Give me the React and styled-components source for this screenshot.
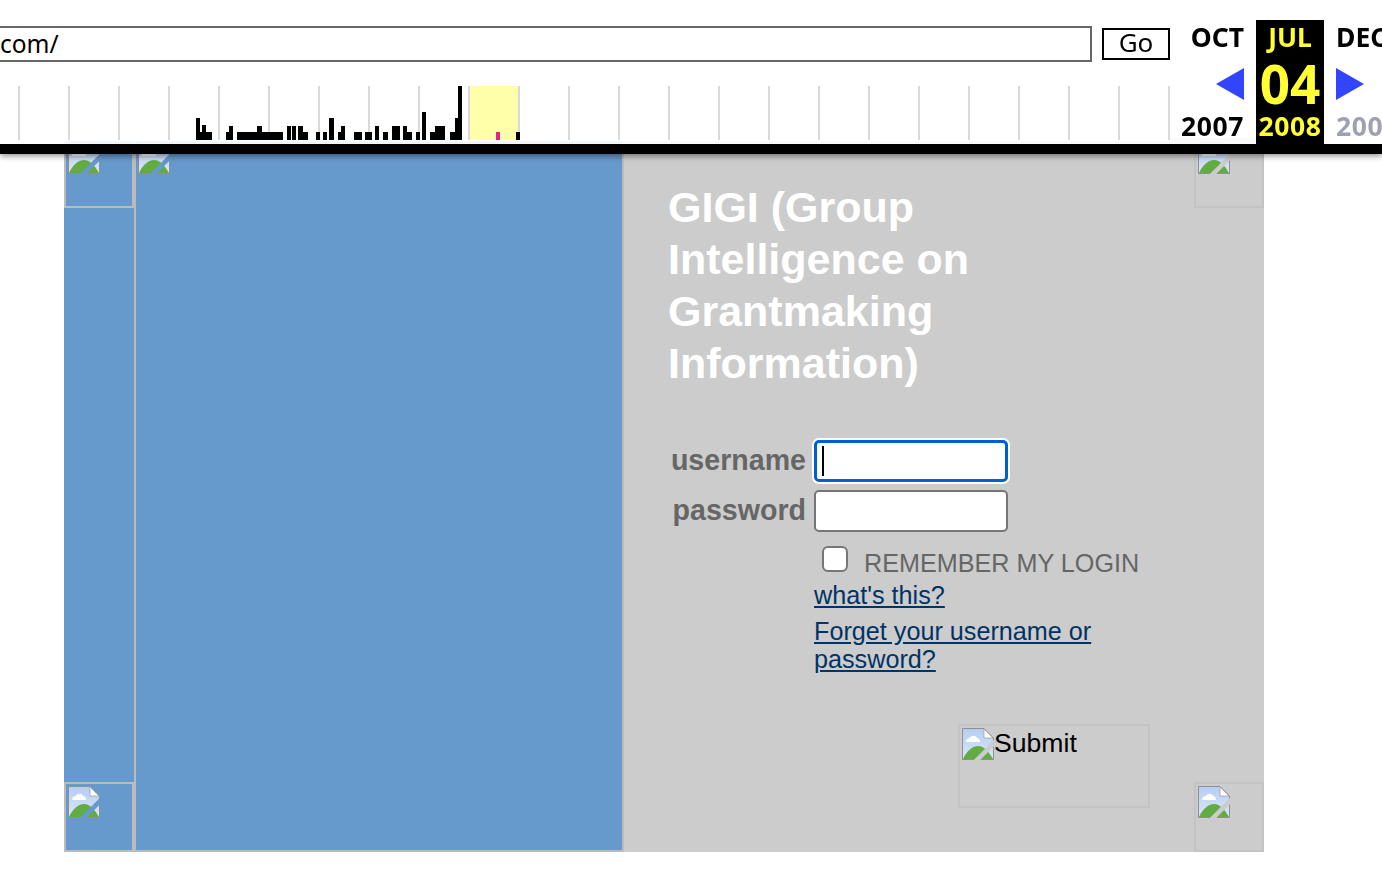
import React from "react";
import styled, { createGlobalStyle } from "styled-components";

const GlobalStyle = createGlobalStyle`
  html, body {
    margin: 0;
    padding: 0;
    background: #fff;
    font-family: "Liberation Sans", Arial, sans-serif;
  }
`;

const Toolbar = styled.div`
  position: fixed;
  top: 0;
  left: 0;
  right: 0;
  height: 144px;
  display: flex;
  background: rgba(255, 255, 255, 0.9);
  border-bottom: 10px solid #000;
  box-shadow: 0 2px 6px rgba(0, 0, 0, 0.45);
  overflow: hidden;
  z-index: 10;
  font-family: "Noto Sans", sans-serif;
`;

const ToolbarLeft = styled.div`
  width: 1180px;
  flex: none;
  display: flex;
  flex-direction: column;
  padding-top: 26px;
  box-sizing: border-box;
`;

const UrlRow = styled.div`
  display: flex;
  align-items: center;
  gap: 10px;
  height: 36px;
`;

const UrlInput = styled.div`
  width: 1096px;
  height: 36px;
  margin-left: -4px;
  box-sizing: border-box;
  border: 2px solid #666;
  padding-left: 2px;
  background: #fff;
  font-size: 24.5px;
  line-height: 31px;
  color: #000;
  white-space: nowrap;
  overflow: hidden;
`;

const GoButton = styled.div`
  width: 68px;
  height: 32px;
  box-sizing: border-box;
  border: 2px solid #000;
  background: #fff;
  font-size: 26px;
  line-height: 25px;
  text-align: center;
  color: #000;
`;

const Timeline = styled.svg`
  display: block;
  margin-top: 24px;
  background: #fff;
`;

const Calendar = styled.div`
  flex: 1;
  display: flex;
  padding-top: 20px;
  min-width: 0;
`;

const MonthCol = styled.div`
  flex: none;
  width: ${(p) => p.$width}px;
  box-sizing: border-box;
  background: ${(p) => (p.$active ? "#000" : "transparent")};
  color: ${(p) => (p.$active ? "#ffff33" : "#000")};
  text-align: ${(p) => p.$align};
  padding: ${(p) => (p.$align === "right" ? "0 12px 0 0" : p.$align === "left" ? "0 0 0 12px" : "0")};
  white-space: nowrap;
  display: flex;
  flex-direction: column;
  font-weight: 700;
`;

const MonthName = styled.div`
  font-size: 26.5px;
  line-height: 34px;
  height: 36px;
`;

const DayCell = styled.div`
  height: 50px;
  margin-top: 3px;
  font-size: 53px;
  line-height: 50px;
  display: flex;
  align-items: center;
  justify-content: ${(p) => p.$justify};
`;

const YearName = styled.div`
  margin-top: 1px;
  font-size: 26.5px;
  line-height: 32px;
  letter-spacing: 0.6px;
  color: ${(p) => p.$color || "inherit"};
`;

const Frame = styled.div`
  width: 1200px;
  height: 714px;
  margin: 138px 0 0 64px;
  display: flex;
`;

const SideColumn = styled.div`
  width: 70px;
  flex: none;
  background: #6699cc;
  display: flex;
  flex-direction: column;
  justify-content: space-between;
`;

const Tile = styled.div`
  width: 70px;
  height: 70px;
  box-sizing: border-box;
  padding: 2px;
  border: 2px solid ${(p) => p.$border};
`;

const BluePanel = styled.div`
  width: 490px;
  flex: none;
  box-sizing: border-box;
  background: #6699cc;
  border-left: 2px solid #bbb;
  border-right: 2px solid #bbb;
  border-bottom: 2px solid #bbb;
  padding: 4px 2px;
`;

const GreyPanel = styled.div`
  flex: 1;
  display: flex;
  background: #ccc;
`;

const Content = styled.div`
  flex: 1;
  box-sizing: border-box;
  padding: 43px 0 0 45px;
`;

const Corners = styled.div`
  width: 70px;
  flex: none;
  display: flex;
  flex-direction: column;
  justify-content: space-between;
`;

const Title = styled.h1`
  margin: 0 0 0 -1px;
  width: 340px;
  font-size: 43px;
  line-height: 52px;
  font-weight: 700;
  color: #fff;
`;

const LoginGrid = styled.div`
  margin-top: 51px;
  display: grid;
  grid-template-columns: 137px 194px;
  column-gap: 8px;
  row-gap: 8px;
  align-items: center;
`;

const Label = styled.label`
  font-size: 28.6px;
  line-height: 40px;
  padding-bottom: 2px;
  font-weight: 700;
  color: #666;
  text-align: right;
`;

const TextField = styled.input`
  width: 194px;
  height: 42px;
  box-sizing: border-box;
  margin: 0;
  border-radius: 5px;
  border: ${(p) => (p.$focused ? "3px solid #0060d0" : "2px solid #767676")};
  box-shadow: ${(p) => (p.$focused ? "0 0 0 2px #fff" : "none")};
  background-color: #fff;
  background-image: ${(p) =>
    p.$focused ? "linear-gradient(#000, #000)" : "none"};
  background-repeat: no-repeat;
  background-size: 2px 30px;
  background-position: 5px 3px;
  outline: none;
`;

const RememberRow = styled.div`
  margin: 14px 0 0 145px;
  padding-left: 8px;
  display: flex;
  align-items: flex-start;
  gap: 16px;
  height: 35px;
`;

const CheckBox = styled.input`
  appearance: none;
  width: 26px;
  height: 26px;
  margin: 0;
  box-sizing: border-box;
  border: 2px solid #767676;
  border-radius: 6px;
  background: #fff;
`;

const RememberText = styled.span`
  font-size: 25.2px;
  line-height: 34px;
  color: #666;
`;

const HelpLinks = styled.div`
  margin-left: 145px;
  width: 320px;
  display: flex;
  flex-direction: column;
  gap: 8px;
`;

const HelpLink = styled.a`
  font-size: 25.2px;
  line-height: 28px;
  color: #003366;
  text-decoration: underline;
`;

const SubmitBox = styled.div`
  width: 192px;
  height: 84px;
  margin: 51px 0 0 289px;
  box-sizing: border-box;
  border: 2px solid #c3c3c3;
  padding: 2px;
  display: flex;
  align-items: flex-start;
  font-size: 26.6px;
  line-height: 30px;
  color: #000;
`;

const BrokenIcon = styled.svg`
  display: block;
  flex: none;
`;

const BrokenImage = ({ slash }) => (
  <BrokenIcon width="32" height="32" viewBox="0 0 32 32">
    <defs>
      <linearGradient id="sky" x1="0" y1="0" x2="0" y2="1">
        <stop offset="0" stopColor="#b5cdf2" />
        <stop offset="1" stopColor="#dbe7f8" />
      </linearGradient>
      <clipPath id="sheet">
        <path d="M1 1H22L31 10V31H1Z" />
      </clipPath>
    </defs>
    <path d="M.5.5H22L31.5 10V31.5H.5Z" fill="url(#sky)" stroke="#8f8f8f" />
    <path d="M22 1V10H31Z" fill="#fff" stroke="#9a9a9a" strokeWidth=".7" />
    <path d="M4 14C4 11 6 10 8 10C9 7 14 7 15 10C17 10 18 12 18 14Z" fill="#fff" />
    <g clipPath="url(#sheet)">
      <path d="M1 31C5 22 11 18 16 18C22 18 27 24 31 31Z" fill="#62ad43" />
    </g>
    <path d="M13 34L35 12" stroke={slash} strokeWidth="4.500" />
    <path d="M.5 31.500H12M27 31.500H31.500V27" fill="none" stroke="#8f8f8f" />
  </BrokenIcon>
);

const GRID = Array.from({ length: 24 }, (_, i) => 18 + i * 50);

// [x, width, height] from the baseline
const BARS = [
  [196, 4, 22], [200, 2, 8], [202, 4, 15], [206, 6, 8], [226, 3, 8], [229, 4, 14],
  [237, 20, 8], [257, 5, 14], [262, 10, 8], [272, 11, 8], [287, 4, 14], [292, 4, 14],
  [298, 5, 14], [303, 5, 8], [316, 4, 8], [323, 4, 8], [329, 5, 22],
  [338, 3, 8], [341, 4, 14], [354, 8, 8], [365, 5, 8], [370, 2, 8],
  [375, 4, 14], [383, 5, 8], [392, 8, 14], [403, 4, 14], [407, 5, 8],
  [416, 4, 8], [422, 4, 28], [430, 5, 8], [435, 7, 14], [442, 3, 14],
  [450, 5, 8], [455, 3, 22], [458, 4, 54], [516, 4, 8],
];

const Sparkline = () => (
  <Timeline width="1170" height="55" viewBox="0 0 1170 55">
    {GRID.map((x) => (
      <rect key={x} x={x} y="0" width="2" height="54" fill="#d9d9d9" />
    ))}
    <rect x="470" y="0" width="48" height="54" fill="#ffffaa" />
    {BARS.map(([x, w, h]) => (
      <rect key={x} x={x} y={54 - h} width={w} height={h} fill="#000" />
    ))}
    <rect x="496" y="46" width="4" height="8" fill="#e8218a" />
  </Timeline>
);

const Arrow = styled.svg`
  display: block;
`;

const App = () => {
  return (
    <>
      <GlobalStyle />
      <Toolbar>
        <ToolbarLeft>
          <UrlRow>
            <UrlInput>com/</UrlInput>
            <GoButton>Go</GoButton>
          </UrlRow>
          <Sparkline />
        </ToolbarLeft>
        <Calendar>
          <MonthCol $width={76} $align="right">
            <MonthName>OCT</MonthName>
            <DayCell $justify="flex-end">
              <Arrow width="28" height="32" viewBox="0 0 28 32">
                <path d="M0 16L28 0V32Z" fill="#3344ff" />
              </Arrow>
            </DayCell>
            <YearName>2007</YearName>
          </MonthCol>
          <MonthCol $width={68} $align="center" $active>
            <MonthName>JUL</MonthName>
            <DayCell $justify="center">04</DayCell>
            <YearName>2008</YearName>
          </MonthCol>
          <MonthCol $width={80} $align="left">
            <MonthName>DEC</MonthName>
            <DayCell $justify="flex-start">
              <Arrow width="28" height="32" viewBox="0 0 28 32">
                <path d="M28 16L0 0V32Z" fill="#3344ff" />
              </Arrow>
            </DayCell>
            <YearName $color="#a0a0b4">2009</YearName>
          </MonthCol>
        </Calendar>
      </Toolbar>

      <Frame>
        <SideColumn>
          <Tile $border="#bbb">
            <BrokenImage slash="#6699cc" />
          </Tile>
          <Tile $border="#bbb">
            <BrokenImage slash="#6699cc" />
          </Tile>
        </SideColumn>
        <BluePanel>
          <BrokenImage slash="#6699cc" />
        </BluePanel>
        <GreyPanel>
          <Content>
            <Title>GIGI (Group Intelligence on Grantmaking Information)</Title>
            <LoginGrid>
              <Label>username</Label>
              <TextField $focused readOnly />
              <Label>password</Label>
              <TextField type="password" readOnly />
            </LoginGrid>
            <RememberRow>
              <CheckBox type="checkbox" readOnly />
              <RememberText>REMEMBER MY LOGIN</RememberText>
            </RememberRow>
            <HelpLinks>
              <HelpLink href="#">what's this?</HelpLink>
              <HelpLink href="#">Forget your username or password?</HelpLink>
            </HelpLinks>
            <SubmitBox>
              <BrokenImage slash="#ccc" />
              Submit
            </SubmitBox>
          </Content>
          <Corners>
            <Tile $border="#c3c3c3">
              <BrokenImage slash="#ccc" />
            </Tile>
            <Tile $border="#c3c3c3">
              <BrokenImage slash="#ccc" />
            </Tile>
          </Corners>
        </GreyPanel>
      </Frame>
    </>
  );
};

export default App;
